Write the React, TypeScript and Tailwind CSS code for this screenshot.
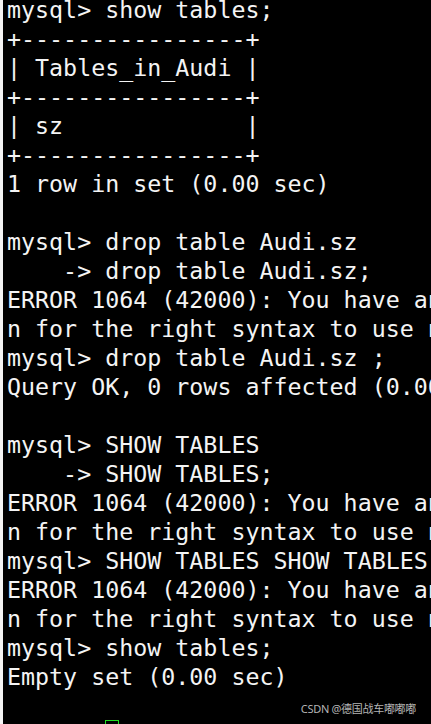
import React from "react";

const err =
  "ERROR 1064 (42000): You have an error in your SQL syntax; check the manual that corresponds to your MySQL server versio";

const lines: string[] = [
  "mysql> show tables;",
  "+----------------+",
  "| Tables_in_Audi |",
  "+----------------+",
  "| sz             |",
  "+----------------+",
  "1 row in set (0.00 sec)",
  "",
  "mysql> drop table Audi.sz",
  "    -> drop table Audi.sz;",
  err,
  "n for the right syntax to use near 'drop table Audi.sz' at line 2",
  "mysql> drop table Audi.sz ;",
  "Query OK, 0 rows affected (0.00 sec)",
  "",
  "mysql> SHOW TABLES",
  "    -> SHOW TABLES;",
  err,
  "n for the right syntax to use near 'SHOW TABLES' at line 2",
  "mysql> SHOW TABLES SHOW TABLES;",
  err,
  "n for the right syntax to use near 'SHOW TABLES' at line 1",
  "mysql> show tables;",
  "Empty set (0.00 sec)",
  "",
];

export default function App() {
  return (
    <div className="relative flex h-[724px] w-[431px] overflow-hidden bg-black">
      <div className="w-[3px] shrink-0 bg-[#f4f4f4]" />
      <div
        className="-mt-[5px] flex min-w-0 flex-1 flex-col overflow-hidden pl-[4px] text-[23.3px] leading-[29px] text-[#f4f4f4]"
        style={{ fontFamily: "'DejaVu Sans Mono', monospace" }}
      >
        {lines.map((l, i) => (
          <div key={i} className="h-[29px] shrink-0 whitespace-pre">
            {l}
          </div>
        ))}
        <div className="flex h-[29px] shrink-0 whitespace-pre">
          <span>mysql&gt; </span>
          <span className="h-[29px] w-[14px] border border-[#22dd22]" />
        </div>
      </div>
      <div
        className="absolute right-[15px] top-[701px] text-[11px] leading-[15px] tracking-[-0.3px] text-[#b4b4b4]"
        style={{ fontFamily: "'Noto Sans', 'Noto Sans CJK SC', sans-serif" }}
      >
        CSDN @德国战车嘟嘟嘟
      </div>
    </div>
  );
}
